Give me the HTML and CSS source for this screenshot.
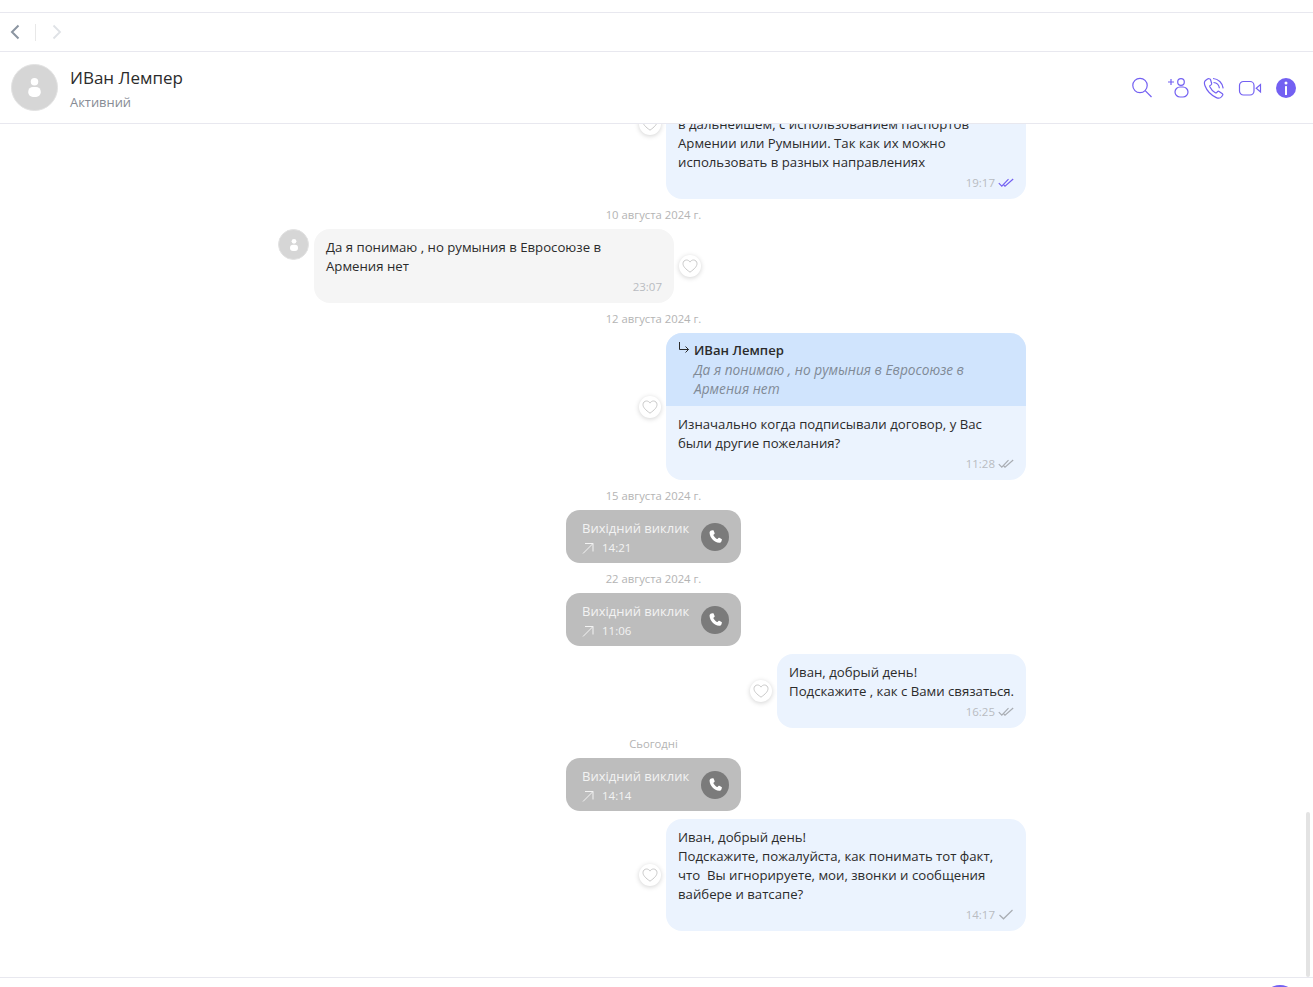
FILE: index.html
```html
<!DOCTYPE html>
<html lang="ru">
<head>
<meta charset="utf-8">
<title>ИВан Лемпер</title>
<link rel="stylesheet" href="styles.css">
</head>
<body>
<svg class="defs" width="0" height="0" aria-hidden="true">
  <defs>
    <symbol id="heart" viewBox="0 0 16 16"><path d="M8 14.200C3.600 11 1 8.500 1 5.600 1 3.500 2.600 2 4.500 2 6 2 7.300 2.800 8 4.100 8.700 2.800 10 2 11.500 2 13.400 2 15 3.500 15 5.600 15 8.500 12.400 11 8 14.200Z" fill="none" stroke="currentColor" stroke-width="1"/></symbol>
    <symbol id="person" viewBox="0 0 24 24"><circle cx="12" cy="6.500" r="3.600" fill="currentColor"/><rect x="6" y="11.500" width="12" height="9.500" rx="4.500" fill="currentColor"/></symbol>
    <symbol id="callph" viewBox="0 0 16 16"><path d="M4.300 1.600 5.700 1.200c.4-.1.700.1.900.4l1 2.300c.2.400.1.700-.2 1L6.500 5.700c-.2.200-.2.400-.1.600.7 1.500 2 2.900 3.500 3.700.2.100.4.100.6-.1l.9-.9c.3-.3.700-.4 1-.2l2.100 1.100c.4.200.5.500.4.900l-.4 1.500c-.3 1-1.200 1.700-2.300 1.500C7 12.900 2.900 8.700 2.600 3.900c-.1-1 .6-2 1.700-2.300Z" fill="currentColor"/></symbol>
    <symbol id="arrow" viewBox="0 0 12 12"><path d="M1 11.500 11 1.500M3 1.500h8v8" fill="none" stroke="currentColor" stroke-width="1"/></symbol>
    <symbol id="tick1" viewBox="0 0 16 11"><path d="M1.500 6 5.500 9.800 14.500 1" fill="none" stroke="currentColor" stroke-width="1.200"/></symbol>
    <symbol id="tick2" viewBox="0 0 16 11"><path d="M.8 6.200 3.800 9.200 10.500 2.200M5.800 8 7 9.200 15.200 2" fill="none" stroke="currentColor" stroke-width="1.200"/></symbol>
  </defs>
</svg>
<div class="strip"></div>
<nav class="nav">
  <svg class="chev chev-back" width="10" height="16" viewBox="0 0 10 16"><path d="M8.500 1.500 2 8l6.500 6.500" fill="none" stroke="currentColor" stroke-width="2"/></svg>
  <span class="nav-sep"></span>
  <svg class="chev chev-next" width="10" height="16" viewBox="0 0 10 16"><path d="M1.500 1.500 8 8l-6.500 6.500" fill="none" stroke="currentColor" stroke-width="1.800"/></svg>
</nav>
<header class="head">
  <div class="head-avatar"><svg width="25" height="25"><use href="#person"/></svg></div>
  <div class="head-titles">
    <div class="head-name">ИВан Лемпер</div>
    <div class="head-status">Активний</div>
  </div>
  <div class="head-actions">
    <svg width="24" height="24" viewBox="0 0 24 24" class="hicon"><circle cx="10" cy="9.500" r="7.200"/><path d="m15.200 14.700 6.300 6.300"/></svg>
    <svg width="24" height="24" viewBox="0 0 24 24" class="hicon"><path d="M2 6h6M5 3v6"/><circle cx="15" cy="6" r="3.300"/><rect x="9" y="11" width="13" height="10" rx="5"/></svg>
    <svg width="24" height="24" viewBox="0 0 24 24" class="hicon"><path d="M5.500 3 3.500 4.500C2 5.700 2.200 7.600 3 9.800 4.800 14.500 9 19.200 14.300 21.600c2 .9 3.900.8 5-.6l1.300-1.700c.4-.6.300-1.200-.2-1.600l-3.300-2.300c-.5-.3-1-.3-1.400.1l-1.100 1.100c-.4.400-.9.400-1.300.2-2.300-1.300-4.400-3.700-5.500-6-.2-.5-.1-.9.300-1.200l1.200-1c.4-.4.500-.9.300-1.400L8.500 3.500C8 2.700 6.300 2.400 5.500 3Z"/><path d="M11.500 6.500c3 .2 5.500 2.600 5.900 5.800"/><path d="M11 2.500c5.300.3 9.600 4.500 10.200 9.900"/></svg>
    <svg width="24" height="24" viewBox="0 0 24 24" class="hicon"><rect x="1.500" y="5.500" width="14.500" height="13.500" rx="4"/><path d="M22.500 8.500v7.500L18.200 12.300Z"/></svg>
    <svg width="24" height="24" viewBox="0 0 24 24"><circle cx="12" cy="12" r="10" fill="#7360f2"/><circle cx="12" cy="7" r="1.500" fill="#fff"/><rect x="11" y="10" width="2" height="9" rx=".5" fill="#fff"/></svg>
  </div>
</header>
<main class="chat">
  <div class="stream">
    <div class="row row-out">
      <button class="like"><svg width="16" height="16"><use href="#heart"/></svg></button>
      <div class="bubble bubble-out bubble-clipped">
        <div class="text">в дальнейшем, с использованием паспортов<br>Армении или Румынии. Так как их можно<br>использовать в разных направлениях</div>
        <div class="meta">19:17 <svg class="tick tick-read" width="16" height="11"><use href="#tick2"/></svg></div>
      </div>
    </div>
    <div class="date">10 августа 2024 г.</div>
    <div class="row row-in">
      <div class="avatar"><svg width="16" height="16"><use href="#person"/></svg></div>
      <div class="bubble bubble-in">
        <div class="text">Да я понимаю , но румыния в Евросоюзе в<br>Армения нет</div>
        <div class="meta">23:07</div>
      </div>
      <button class="like"><svg width="16" height="16"><use href="#heart"/></svg></button>
    </div>
    <div class="date">12 августа 2024 г.</div>
    <div class="row row-out">
      <button class="like"><svg width="16" height="16"><use href="#heart"/></svg></button>
      <div class="bubble bubble-out bubble-reply">
        <div class="quote">
          <svg class="quote-arrow" width="12" height="12" viewBox="0 0 12 12"><path d="M1.500 0v7.500h9M7.500 4.500l3 3-3 3" fill="none" stroke="#2b2b2b" stroke-width="1"/></svg>
          <div>
            <div class="quote-name">ИВан Лемпер</div>
            <div class="quote-text">Да я понимаю , но румыния в Евросоюзе в<br>Армения нет</div>
          </div>
        </div>
        <div class="reply-body">
          <div class="text">Изначально когда подписывали договор, у Вас<br>были другие пожелания?</div>
          <div class="meta">11:28 <svg class="tick" width="16" height="11"><use href="#tick2"/></svg></div>
        </div>
      </div>
    </div>
    <div class="date">15 августа 2024 г.</div>
    <div class="row row-call">
      <div class="call">
        <div class="call-info">
          <div class="call-title">Вихідний виклик</div>
          <div class="call-time"><svg width="12" height="12"><use href="#arrow"/></svg>14:21</div>
        </div>
        <div class="call-btn"><svg width="16" height="16"><use href="#callph"/></svg></div>
      </div>
    </div>
    <div class="date">22 августа 2024 г.</div>
    <div class="row row-call">
      <div class="call">
        <div class="call-info">
          <div class="call-title">Вихідний виклик</div>
          <div class="call-time"><svg width="12" height="12"><use href="#arrow"/></svg>11:06</div>
        </div>
        <div class="call-btn"><svg width="16" height="16"><use href="#callph"/></svg></div>
      </div>
    </div>
    <div class="row row-out row-gap">
      <button class="like"><svg width="16" height="16"><use href="#heart"/></svg></button>
      <div class="bubble bubble-out bubble-fit">
        <div class="text">Иван, добрый день!<br>Подскажите , как с Вами связаться.</div>
        <div class="meta">16:25 <svg class="tick" width="16" height="11"><use href="#tick2"/></svg></div>
      </div>
    </div>
    <div class="date">Сьогодні</div>
    <div class="row row-call">
      <div class="call">
        <div class="call-info">
          <div class="call-title">Вихідний виклик</div>
          <div class="call-time"><svg width="12" height="12"><use href="#arrow"/></svg>14:14</div>
        </div>
        <div class="call-btn"><svg width="16" height="16"><use href="#callph"/></svg></div>
      </div>
    </div>
    <div class="row row-out row-gap">
      <button class="like"><svg width="16" height="16"><use href="#heart"/></svg></button>
      <div class="bubble bubble-out">
        <div class="text">Иван, добрый день!<br>Подскажите, пожалуйста, как понимать тот факт,<br>что&nbsp; Вы игнорируете, мои, звонки и сообщения<br>вайбере и ватсапе?</div>
        <div class="meta">14:17 <svg class="tick" width="16" height="11"><use href="#tick1"/></svg></div>
      </div>
    </div>
  </div>
  <div class="scrollbar"></div>
</main>
<footer class="foot"><span class="send"></span></footer>
</body>
</html>
```

FILE: styles.css
```css
* { box-sizing: border-box; }
html, body { height: 100%; }
body {
  margin: 0;
  height: 987px;
  overflow: hidden;
  display: flex;
  flex-direction: column;
  background: #fff;
  color: #2b2b2b;
  font-family: "Open Sans", "Noto Sans", sans-serif;
  font-size: 13px;
}
.defs { position: absolute; }
.strip { flex: none; height: 13px; border-bottom: 1px solid #e8e8ef; }
.nav {
  flex: none;
  height: 39px;
  padding-left: 10px;
  display: flex;
  align-items: center;
  border-bottom: 1px solid #e8e8ef;
}
.chev-back { color: #8b95a1; }
.chev-next { color: #dfe2e6; }
.nav-sep { width: 1px; height: 17px; background: #e8e8e8; margin: 0 16px 0 15px; }
.head {
  flex: none;
  height: 72px;
  padding: 0 15px 0 11px;
  display: flex;
  align-items: center;
  border-bottom: 1px solid #e8e8ef;
  position: relative;
  z-index: 2;
  background: #fff;
}
.head-avatar {
  width: 47px;
  height: 47px;
  border-radius: 50%;
  background: #d6d6d6;
  border: 1px solid #e2e2e2;
  color: #fff;
  display: flex;
  align-items: center;
  justify-content: center;
  margin-right: 12px;
}
.head-titles { flex: 1; padding-top: 3px; }
.head-name { font-size: 17px; line-height: 24px; color: #2b2b2b; }
.head-status { font-size: 12.900px; line-height: 20px; margin-top: 2px; color: #868b94; }
.head-actions { display: flex; gap: 12px; align-items: center; }
.hicon { fill: none; stroke: #7360f2; stroke-width: 1.200; }
.chat {
  flex: 1;
  min-height: 0;
  position: relative;
  overflow: hidden;
  display: flex;
  flex-direction: column;
  justify-content: flex-end;
  padding-bottom: 46px;
}
.stream { flex: none; width: 751px; margin-left: 278px; display: flex; flex-direction: column; }
.date {
  height: 30px;
  display: flex;
  align-items: center;
  justify-content: center;
  font-size: 11.300px;
  color: #b4b4b4;
}
.row { display: flex; align-items: center; gap: 5px; }
.row-out { justify-content: flex-end; padding-right: 3px; }
.row-in { align-items: flex-start; }
.row-in .like { align-self: center; }
.row-call { justify-content: center; }
.row-gap { margin-top: 8px; }
.avatar {
  flex: none;
  width: 31px;
  height: 31px;
  border-radius: 50%;
  background: #d6d6d6;
  border: 1px solid #e2e2e2;
  color: #fff;
  display: flex;
  align-items: center;
  justify-content: center;
}
.like {
  flex: none;
  width: 22px;
  height: 22px;
  padding: 0;
  border: 0;
  border-radius: 50%;
  background: #fff;
  box-shadow: 0 1px 5px rgba(0, 0, 0, .18);
  color: #c9c9c9;
  display: flex;
  align-items: center;
  justify-content: center;
}
.bubble { width: 360px; border-radius: 16px; overflow: hidden; padding: 9px 12px 7px; }
.bubble-out { background: #ebf3fe; }
.bubble-in { background: #f5f5f5; }
.bubble-fit { width: auto; }
.bubble-clipped { min-height: 150px; display: flex; flex-direction: column; justify-content: flex-end; }
.bubble-reply { padding: 0; }
.text { font-size: 13.200px; line-height: 19px; white-space: nowrap; color: #2b2b2b; }
.meta {
  margin-top: 1px;
  height: 19px;
  display: flex;
  align-items: center;
  justify-content: flex-end;
  gap: 3px;
  font-size: 11.500px;
  color: #b9bcc1;
}
.tick { color: #a9adb3; }
.tick-read { color: #7360f2; }
.quote {
  display: flex;
  gap: 4px;
  background: #d0e4fd;
  padding: 8px 12px 8px;
}
.quote-arrow { flex: none; margin-top: 1px; }
.quote-name { font-size: 13.100px; line-height: 19px; font-weight: 600; color: #2b2b2b; }
.quote-text { font-size: 13.700px; line-height: 19px; font-style: italic; color: #808a96; white-space: nowrap; }
.reply-body { padding: 9px 12px 7px; }
.call {
  width: 175px;
  height: 53px;
  border-radius: 14px;
  background: #bdbdbd;
  color: #f3f3f3;
  padding: 9px 12px 0 16px;
  display: flex;
  justify-content: space-between;
}
.call-title { font-size: 13px; line-height: 19px; white-space: nowrap; }
.call-time { font-size: 11.500px; line-height: 19px; display: flex; align-items: center; gap: 8px; }
.call-btn {
  flex: none;
  width: 28px;
  height: 28px;
  margin-top: 4px;
  border-radius: 50%;
  background: #7b7b7b;
  color: #fff;
  display: flex;
  align-items: center;
  justify-content: center;
}
.scrollbar {
  position: absolute;
  right: 3px;
  bottom: 0;
  width: 4px;
  height: 165px;
  border-radius: 2px;
  background: #e3e3e3;
}
.foot {
  flex: none;
  height: 10px;
  border-top: 1px solid #e8e8ef;
  overflow: hidden;
  display: flex;
  justify-content: flex-end;
  padding: 7px 16px 0 0;
}
.send { flex: none; width: 34px; height: 34px; border-radius: 50%; background: #7360f2; }
```
